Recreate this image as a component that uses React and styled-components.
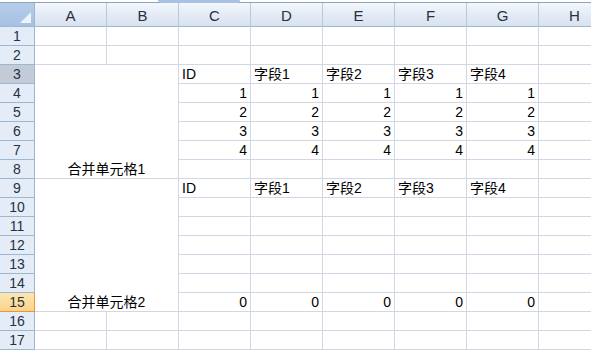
import styled, { createGlobalStyle } from 'styled-components';

const GlobalStyle = createGlobalStyle`
  html, body {
    margin: 0;
    padding: 0;
    background: #ffffff;
    overflow: hidden;
  }
  body {
    font-family: "Liberation Sans", "Noto Sans CJK SC", sans-serif;
  }
`;

const COLS = ['A', 'B', 'C', 'D', 'E', 'F', 'G', 'H'];
const FIELDS = ['ID', '字段1', '字段2', '字段3', '字段4'];
const MERGES = [
  { top: 3, bottom: 8, text: '合并单元格1' },
  { top: 9, bottom: 15, text: '合并单元格2' },
];

const cellValue = (row, col) => {
  if (col < 2 || col > 6) return null;
  if (row === 3 || row === 9) return { text: FIELDS[col - 2], num: false };
  if (row >= 4 && row <= 7) return { text: String(row - 3), num: true };
  if (row === 15) return { text: '0', num: true };
  return null;
};

const inMerge = (row, col) =>
  col < 2 && MERGES.some((m) => row >= m.top && row <= m.bottom);

export default function App() {
  const rows = Array.from({ length: 17 }, (_, i) => i + 1);

  return (
    <>
      <GlobalStyle />
      <Sheet>
        <TopBar>
          <BarTab />
        </TopBar>
        <Grid>
          <Corner $row={1} $col={1} />
          {COLS.map((c, i) => (
            <ColHeader key={c} $row={1} $col={i + 2}>
              {c}
            </ColHeader>
          ))}

          {rows.map((r) => (
            <RowHeader
              key={'h' + r}
              $row={r + 1}
              $col={1}
              $state={r === 3 ? 'dim' : r === 15 ? 'active' : 'normal'}
            >
              {r}
            </RowHeader>
          ))}

          {MERGES.map((m) => (
            <Cell
              key={m.text}
              $row={m.top + 1}
              $col={2}
              $rowSpan={m.bottom - m.top + 1}
              $colSpan={2}
              $align="center"
            >
              {m.text}
            </Cell>
          ))}

          {rows.map((r) =>
            COLS.map((c, ci) => {
              if (inMerge(r, ci)) return null;
              const v = cellValue(r, ci);
              return (
                <Cell
                  key={c + r}
                  $row={r + 1}
                  $col={ci + 2}
                  $align={v && v.num ? 'flex-end' : 'flex-start'}
                >
                  {v ? v.text : ''}
                </Cell>
              );
            })
          )}
        </Grid>
      </Sheet>
    </>
  );
}

const Sheet = styled.div`
  width: 591px;
  height: 350px;
  overflow: hidden;
  background: #ffffff;
  display: flex;
  flex-direction: column;
`;

const TopBar = styled.div`
  height: 2px;
  border-bottom: 1px solid #8fa3bd;
  padding-left: 158px;
  display: flex;
  flex-shrink: 0;
`;

const BarTab = styled.div`
  width: 82px;
  height: 3px;
  background: #a9c1e2;
  border-radius: 0 0 6px 6px;
`;

const Grid = styled.div`
  display: grid;
  grid-template-columns: 35px repeat(8, 72px);
  grid-template-rows: 24px repeat(17, 19px);
  font-size: 14px;
  color: #000000;
`;

const GridItem = styled.div`
  box-sizing: border-box;
  grid-row: ${(p) => p.$row} / span ${(p) => p.$rowSpan || 1};
  grid-column: ${(p) => p.$col} / span ${(p) => p.$colSpan || 1};
  overflow: hidden;
  white-space: nowrap;
`;

const Corner = styled(GridItem)`
  position: relative;
  background: linear-gradient(#b7cdea, #a6c0e4);
  border-right: 1px solid #9eb6ce;
  border-bottom: 1px solid #9eb6ce;

  &::after {
    content: '';
    position: absolute;
    right: 3px;
    bottom: 3px;
    width: 0;
    height: 0;
    border-left: 11px solid transparent;
    border-bottom: 11px solid #eef4fb;
  }
`;

const ColHeader = styled(GridItem)`
  display: flex;
  align-items: flex-end;
  justify-content: center;
  padding-bottom: 2px;
  line-height: 16px;
  font-size: 15px;
  color: #27313f;
  background: linear-gradient(#f3f7fc, #e1e9f4 60%, #d8e2ef);
  border-right: 1px solid #b8c9dc;
  border-bottom: 1px solid #9eb6ce;
`;

const rowHeaderBg = {
  normal: '#e4ecf7',
  dim: '#c3cbd6',
  active: 'linear-gradient(#fde6b3, #f9d48a)',
};

const RowHeader = styled(GridItem)`
  display: flex;
  align-items: flex-end;
  justify-content: center;
  padding-bottom: 1px;
  line-height: 16px;
  color: #27313f;
  background: ${(p) => rowHeaderBg[p.$state]};
  border-right: 1px solid
    ${(p) => (p.$state === 'active' ? '#f29436' : '#9eb6ce')};
  border-bottom: 1px solid
    ${(p) => (p.$state === 'active' ? '#f29436' : '#9eb6ce')};
`;

const Cell = styled(GridItem)`
  display: flex;
  align-items: flex-end;
  justify-content: ${(p) => p.$align};
  padding: 0 3px 1px 3px;
  line-height: 16px;
  background: #ffffff;
  border-right: 1px solid #d0d7e5;
  border-bottom: 1px solid #d0d7e5;
`;
